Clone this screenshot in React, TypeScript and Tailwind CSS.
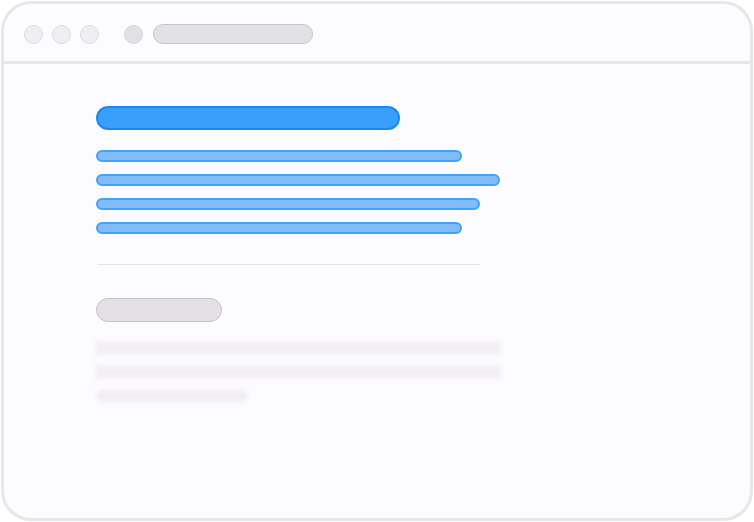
const Dot = ({ dark }: { dark?: boolean }) => (
  <div
    className={
      dark
        ? "w-[19px] h-[19px] rounded-full bg-[#e2dfe5] border border-[#d6d3d9]"
        : "w-[19px] h-[19px] rounded-full bg-[#efeef2] border border-[#dcdbe0]"
    }
  />
);

const App = () => {
  return (
    <div className="w-[754px] h-[522px] bg-white p-px">
      <div className="w-full h-full rounded-[30px] border-[3px] border-[#e7e6ea] bg-[#fcfbfe] overflow-hidden flex flex-col">
        <div className="h-[57px] flex items-center pl-[20px] pt-[3px] shrink-0">
          <div className="flex items-center gap-[9px]">
            <Dot />
            <Dot />
            <Dot />
          </div>
          <div className="ml-[25px]">
            <Dot dark />
          </div>
          <div className="ml-[10px] w-[160px] h-[20px] rounded-full bg-[#e3e0e6] border-[1.5px] border-[#c6c3c9]" />
        </div>
        <div className="h-[3px] bg-[#e7e6ea] shrink-0" />
        <div className="flex flex-col pl-[92px] pt-[42px]">
          <div className="w-[304px] h-[24px] rounded-full bg-[#389ffd] border-2 border-[#1f87ef]" />
          <div className="flex flex-col gap-[12px] mt-[20px]">
            <div className="w-[366px] h-[12px] rounded-full bg-[#80bdfc] border-2 border-[#3fa2fc]" />
            <div className="w-[404px] h-[12px] rounded-full bg-[#80bdfc] border-2 border-[#3fa2fc]" />
            <div className="w-[384px] h-[12px] rounded-full bg-[#80bdfc] border-2 border-[#3fa2fc]" />
            <div className="w-[366px] h-[12px] rounded-full bg-[#80bdfc] border-2 border-[#3fa2fc]" />
          </div>
          <div className="ml-[2px] mt-[30px] w-[382px] h-px bg-[#e3e2e6]" />
          <div className="mt-[33px] w-[126px] h-[24px] rounded-full bg-[#e4e0e6] border-[1.5px] border-[#c6c2c8]" />
          <div className="flex flex-col gap-[12px] mt-[20px] blur-[2px]">
            <div className="w-[404px] h-[12px] bg-[#f2eef2]" />
            <div className="w-[404px] h-[12px] bg-[#f2eef2]" />
            <div className="w-[152px] h-[12px] rounded-full bg-[#f2eef2]" />
          </div>
        </div>
      </div>
    </div>
  );
};

export default App;
